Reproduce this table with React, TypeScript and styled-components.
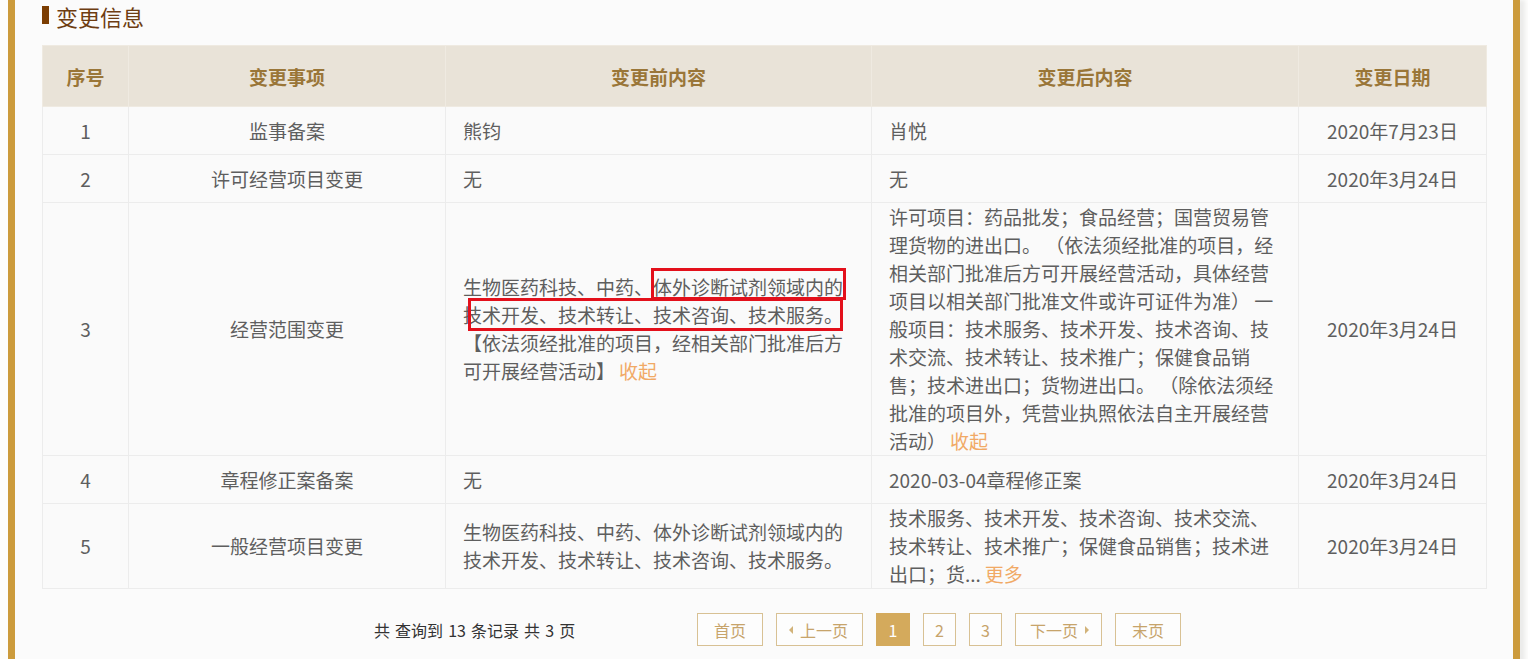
import React from "react";
import styled, { createGlobalStyle } from "styled-components";

const Global = createGlobalStyle`
  html, body { margin: 0; padding: 0; background: #fdfdfc; }
  body { font-family: "Noto Sans CJK SC", "Microsoft YaHei", sans-serif; }
`;

const Frame = styled.div`
  margin: 0 8px;
  border-left: 7px solid #cc9b3c;
  border-right: 7px solid #cc9b3c;
  background: #fbfbfb;
  padding: 0 27px 20px;
  min-height: 659px;
  box-sizing: border-box;
  box-shadow: 5px 0 4px rgba(0, 0, 0, 0.07);
`;

const Title = styled.h2`
  display: flex;
  align-items: center;
  gap: 7px;
  margin: 0;
  height: 32px;
  font-size: 22px;
  font-weight: 400;
  color: #6e3d12;
  line-height: 32px;
`;

const TitleBar = styled.span`
  width: 7px;
  height: 18px;
  background: #7b3d02;
  margin-top: -2px;
`;

const Table = styled.table`
  margin-top: 13px;
  width: 1444px;
  border-collapse: collapse;
  table-layout: fixed;
  font-size: 19px;
  color: #5e5e5e;
`;

const Th = styled.th`
  height: 60px;
  background: #e9e3d8;
  color: #9a7638;
  font-weight: 700;
  font-size: 19px;
  border: 1px solid #efeae1;
  text-align: center;
  padding: 0;
`;

const Td = styled.td<{ $align?: "left" | "center" }>`
  height: 47px;
  background: #fafafa;
  border: 1px solid #ececec;
  padding: 0 17px;
  line-height: 28px;
  text-align: ${(p) => p.$align ?? "left"};
  vertical-align: middle;
  word-break: break-all;
`;

const Link = styled.span`
  color: #f1a965;
  margin-left: 4px;
  cursor: pointer;
`;

const Annotated = styled.div`
  position: relative;
`;

const RedBox = styled.span<{ $l: number; $t: number; $w: number; $h: number }>`
  position: absolute;
  left: ${(p) => p.$l}px;
  top: ${(p) => p.$t}px;
  width: ${(p) => p.$w}px;
  height: ${(p) => p.$h}px;
  border: 3px solid #e3101b;
  box-sizing: border-box;
  pointer-events: none;
`;

const Pager = styled.div`
  display: flex;
  align-items: center;
  margin-top: 24px;
  padding-left: 332px;
  font-size: 16px;
`;

const Info = styled.div`
  width: 323px;
  color: #333;
  font-size: 16px;
  word-spacing: 1.5px;
`;

const PageButtons = styled.div`
  display: flex;
  gap: 13px;
`;

const PageBtn = styled.span<{ $active?: boolean; $num?: boolean; $arrow?: boolean }>`
  display: inline-flex;
  align-items: center;
  justify-content: center;
  height: 33px;
  box-sizing: border-box;
  ${(p) =>
    p.$num
      ? `width: ${p.$active ? 34 : 33}px;`
      : p.$arrow
        ? "padding: 0 14px;"
        : "padding: 0 16px;"}
  border: 1px solid ${(p) => (p.$active ? "#d4aa5c" : "#d8c194")};
  background: ${(p) => (p.$active ? "#d4aa5c" : "#fdfdfd")};
  color: ${(p) => (p.$active ? "#fff" : "#c7a46b")};
  font-size: 16px;
  cursor: pointer;
`;

const Arrow = styled.span<{ $dir: "left" | "right" }>`
  width: 0;
  height: 0;
  border-top: 4px solid transparent;
  border-bottom: 4px solid transparent;
  ${(p) =>
    p.$dir === "left"
      ? "border-right: 4px solid #d2b37a; margin-right: 7px; margin-left: -2px;"
      : "border-left: 4px solid #d2b37a; margin-left: 7px; margin-right: -2px;"}
`;

type Row = {
  no: number;
  item: string;
  before: React.ReactNode;
  after: React.ReactNode;
  date: string;
};

const rows: Row[] = [
  { no: 1, item: "监事备案", before: "熊钧", after: "肖悦", date: "2020年7月23日" },
  { no: 2, item: "许可经营项目变更", before: "无", after: "无", date: "2020年3月24日" },
  {
    no: 3,
    item: "经营范围变更",
    before: (
      <Annotated>
        生物医药科技、中药、体外诊断试剂领域内的技术开发、技术转让、技术咨询、技术服务。【依法须经批准的项目，经相关部门批准后方可开展经营活动】
        <Link>收起</Link>
        <RedBox $l={188} $t={-5} $w={195} $h={32} />
        <RedBox $l={5} $t={25} $w={375} $h={33} />
      </Annotated>
    ),
    after: (
      <>
        许可项目：药品批发；食品经营；国营贸易管理货物的进出口。 （依法须经批准的项目，经相关部门批准后方可开展经营活动，具体经营项目以相关部门批准文件或许可证件为准） 一般项目：技术服务、技术开发、技术咨询、技术交流、技术转让、技术推广；保健食品销售；技术进出口；货物进出口。 （除依法须经批准的项目外，凭营业执照依法自主开展经营活动）
        <Link>收起</Link>
      </>
    ),
    date: "2020年3月24日",
  },
  { no: 4, item: "章程修正案备案", before: "无", after: "2020-03-04章程修正案", date: "2020年3月24日" },
  {
    no: 5,
    item: "一般经营项目变更",
    before: "生物医药科技、中药、体外诊断试剂领域内的技术开发、技术转让、技术咨询、技术服务。",
    after: (
      <>
        技术服务、技术开发、技术咨询、技术交流、技术转让、技术推广；保健食品销售；技术进出口；货...
        <Link>更多</Link>
      </>
    ),
    date: "2020年3月24日",
  },
];

export default function App() {
  return (
    <>
      <Global />
      <Frame>
        <Title>
          <TitleBar />
          变更信息
        </Title>
        <Table>
          <colgroup>
            <col style={{ width: 86 }} />
            <col style={{ width: 317 }} />
            <col style={{ width: 426 }} />
            <col style={{ width: 427 }} />
            <col style={{ width: 188 }} />
          </colgroup>
          <thead>
            <tr>
              <Th>序号</Th>
              <Th>变更事项</Th>
              <Th>变更前内容</Th>
              <Th>变更后内容</Th>
              <Th>变更日期</Th>
            </tr>
          </thead>
          <tbody>
            {rows.map((r) => (
              <tr key={r.no}>
                <Td $align="center">{r.no}</Td>
                <Td $align="center">{r.item}</Td>
                <Td>{r.before}</Td>
                <Td>{r.after}</Td>
                <Td $align="center">{r.date}</Td>
              </tr>
            ))}
          </tbody>
        </Table>
        <Pager>
          <Info>共 查询到 13 条记录 共 3 页</Info>
          <PageButtons>
            <PageBtn>首页</PageBtn>
            <PageBtn $arrow>
              <Arrow $dir="left" />
              上一页
            </PageBtn>
            <PageBtn $num $active>1</PageBtn>
            <PageBtn $num>2</PageBtn>
            <PageBtn $num>3</PageBtn>
            <PageBtn $arrow>
              下一页
              <Arrow $dir="right" />
            </PageBtn>
            <PageBtn>末页</PageBtn>
          </PageButtons>
        </Pager>
      </Frame>
    </>
  );
}
